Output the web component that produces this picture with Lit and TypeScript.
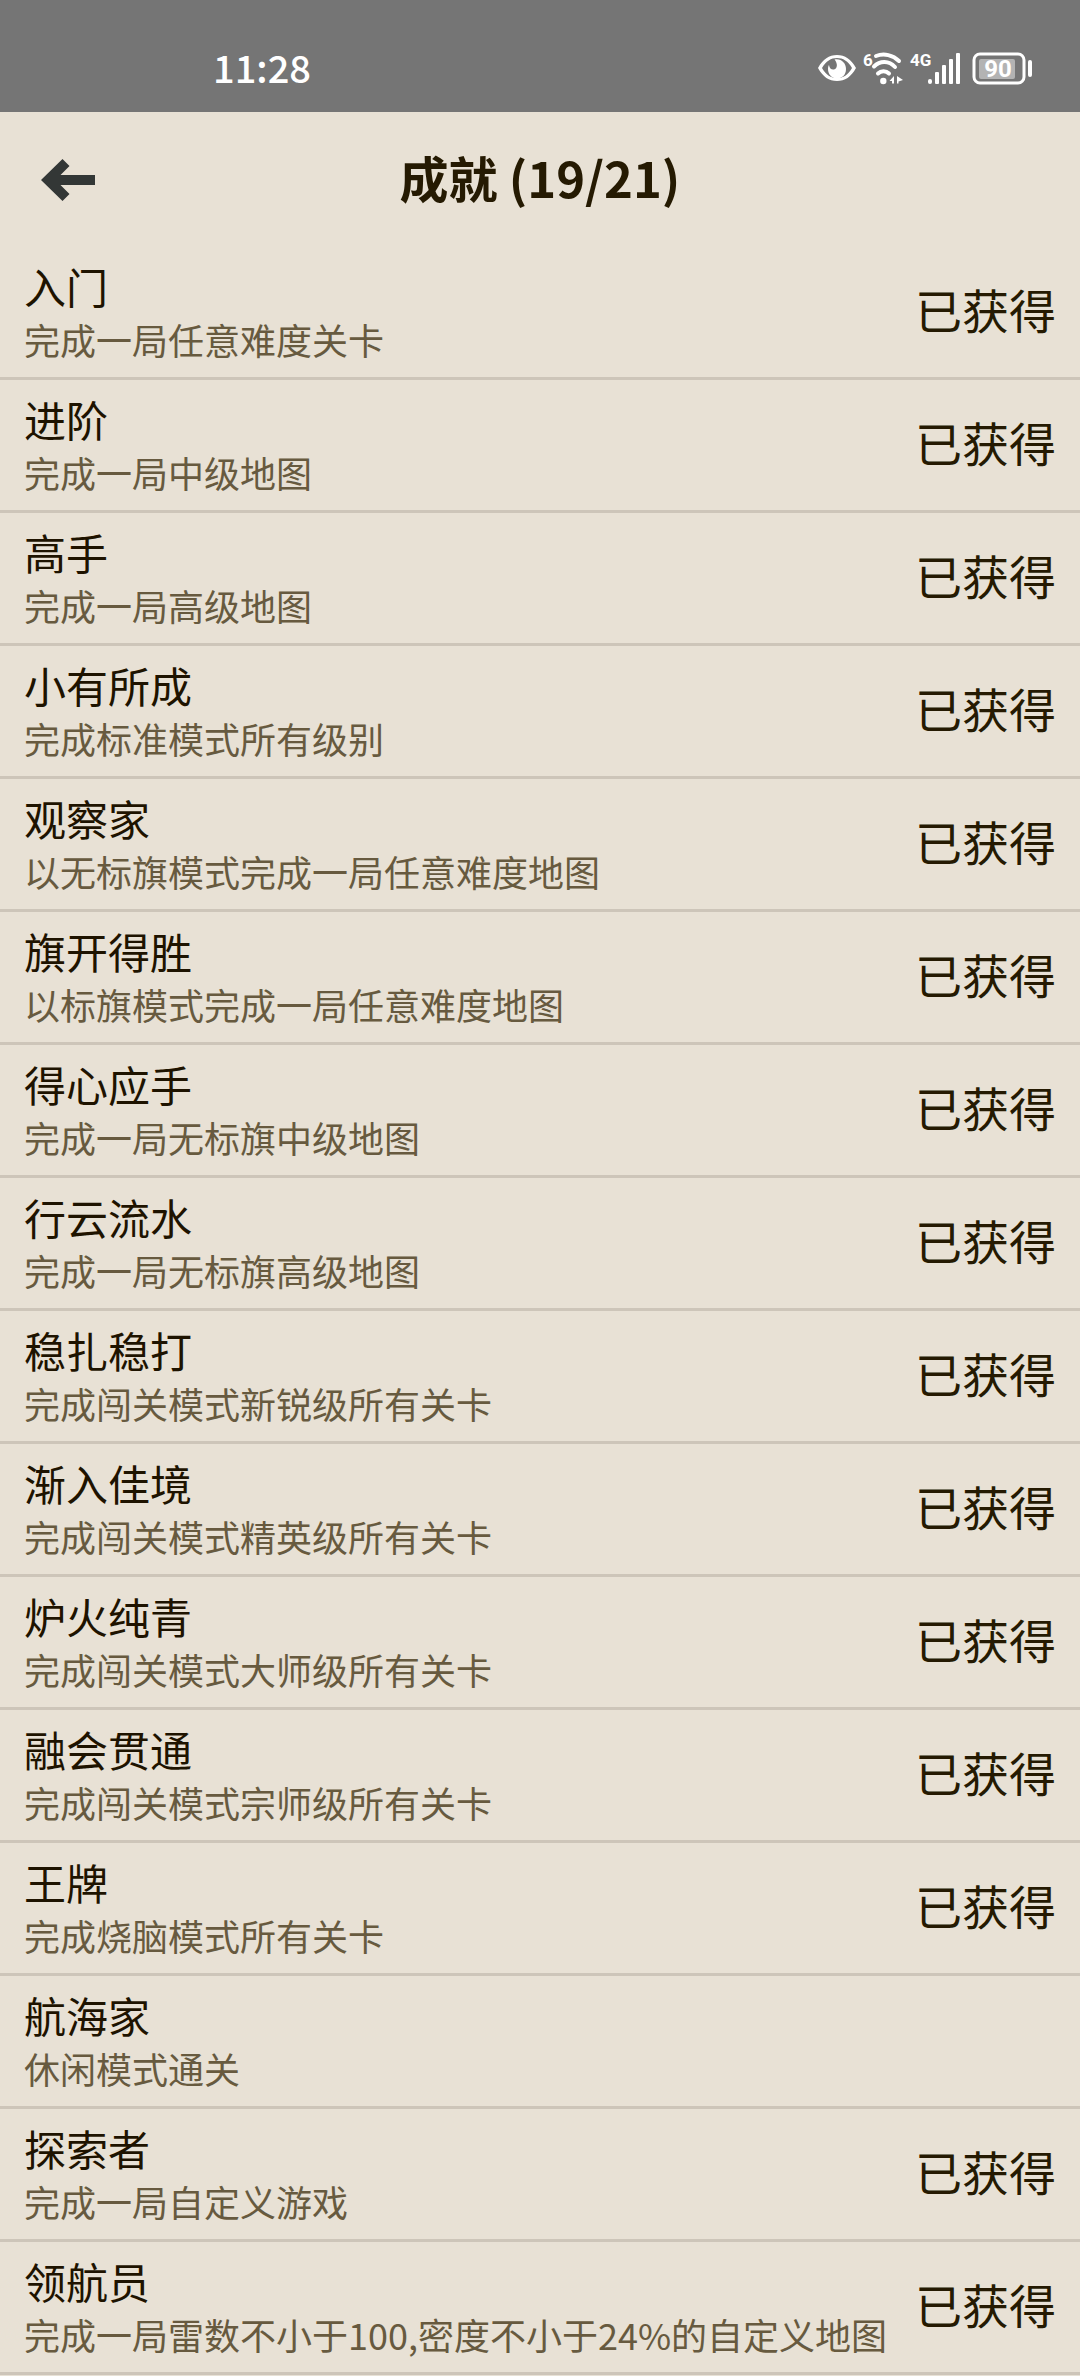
import { LitElement, html, css, nothing } from "lit";
import { customElement, property } from "lit/decorators.js";

interface Achievement {
  name: string;
  goal: string;
  earned: boolean;
}

const achievements: Achievement[] = [
  { name: "入门", goal: "完成一局任意难度关卡", earned: true },
  { name: "进阶", goal: "完成一局中级地图", earned: true },
  { name: "高手", goal: "完成一局高级地图", earned: true },
  { name: "小有所成", goal: "完成标准模式所有级别", earned: true },
  { name: "观察家", goal: "以无标旗模式完成一局任意难度地图", earned: true },
  { name: "旗开得胜", goal: "以标旗模式完成一局任意难度地图", earned: true },
  { name: "得心应手", goal: "完成一局无标旗中级地图", earned: true },
  { name: "行云流水", goal: "完成一局无标旗高级地图", earned: true },
  { name: "稳扎稳打", goal: "完成闯关模式新锐级所有关卡", earned: true },
  { name: "渐入佳境", goal: "完成闯关模式精英级所有关卡", earned: true },
  { name: "炉火纯青", goal: "完成闯关模式大师级所有关卡", earned: true },
  { name: "融会贯通", goal: "完成闯关模式宗师级所有关卡", earned: true },
  { name: "王牌", goal: "完成烧脑模式所有关卡", earned: true },
  { name: "航海家", goal: "休闲模式通关", earned: false },
  { name: "探索者", goal: "完成一局自定义游戏", earned: true },
  { name: "领航员", goal: "完成一局雷数不小于100,密度不小于24%的自定义地图", earned: true },
];

@customElement("status-bar")
export class StatusBar extends LitElement {
  static styles = css`
    :host {
      display: flex;
      align-items: center;
      justify-content: space-between;
      box-sizing: border-box;
      height: 112px;
      padding: 24px 48px 0 213px;
      background: #757575;
      color: #fff;
    }
    .clock {
      padding-bottom: 2px;
      font-size: 38px;
      line-height: 48px;
      font-weight: 500;
    }
    .icons {
      display: flex;
      align-items: center;
      gap: 8px;
    }
    svg {
      display: block;
      overflow: visible;
      fill: currentColor;
    }
    .arc {
      fill: none;
      stroke: currentColor;
      stroke-width: 4;
      stroke-linecap: round;
    }
    .small {
      font: 700 17px Roboto, sans-serif;
    }
    .level {
      font: 700 24px Roboto, sans-serif;
      text-anchor: middle;
    }
  `;

  render() {
    return html`
      <time class="clock">11:28</time>
      <div class="icons">
        <svg width="38" height="34" viewBox="0 0 38 34" aria-hidden="true">
          <path
            fill-rule="evenodd"
            d="M0 17C5 8 11 4 19 4s14 4 19 13C33 26 27 30 19 30S5 26 0 17Zm4 0c4 7 9 10 15 10s11-3 15-10C30 10 25 7 19 7S8 10 4 17Z"
          />
          <path d="M16.500 8.500C23 7 28 12 28 18s-4 9.500-9 9.500-9-4-9-9.500c0-1.500.3-3 1-4 .5 3.500 2.500 5 5 4.500 3.500-.8 4-6 .5-10Z" />
        </svg>
        <svg width="39" height="34" viewBox="0 0 39 34" aria-hidden="true">
          <text class="small" x="-1" y="15">6</text>
          <path class="arc" d="M12 5C20 2 29 4 35 10M10 15.500C16 9.500 25 9.500 31 16M14 22.500C17 19.500 22 19.500 25 22.500" />
          <circle cx="19.300" cy="30" r="3.200" />
          <path d="M30 25v7.500h-2V30h-2.500ZM33 25l6 4-4.500 1.500V32.500H33Z" />
        </svg>
        <svg width="52" height="34" viewBox="0 0 52 34" aria-hidden="true">
          <text class="small" x="-1" y="15">4G</text>
          <rect x="17" y="28" width="4" height="5" rx="2" />
          <rect x="24" y="21" width="4" height="12" rx="1" />
          <rect x="31" y="14" width="4" height="19" rx="1" />
          <rect x="38" y="8" width="4" height="25" rx="1" />
          <rect x="45" y="2" width="4" height="31" rx="1" />
        </svg>
        <svg width="61" height="34" viewBox="0 0 61 34" aria-hidden="true">
          <rect x="3" y="3" width="50" height="29" rx="6" fill="none" stroke="currentColor" stroke-width="3" />
          <rect x="8" y="8" width="36" height="20" rx="2" opacity="0.450" />
          <rect x="57" y="9" width="4" height="17" rx="2" />
          <text class="level" x="27" y="26">90</text>
        </svg>
      </div>
    `;
  }
}

@customElement("achievement-row")
export class AchievementRow extends LitElement {
  @property({ attribute: false }) item!: Achievement;

  static styles = css`
    :host {
      display: flex;
      align-items: center;
      justify-content: space-between;
      gap: 24px;
      padding: 10px 24px 14px;
      border-bottom: 3px solid #cdc5b9;
    }
    .name {
      margin: 0;
      font-size: 42px;
      line-height: 58px;
      font-weight: 400;
      color: #1e1300;
    }
    .goal {
      margin: 0;
      font-size: 36px;
      line-height: 48px;
      color: #675a3f;
    }
    .state {
      flex: none;
      padding-bottom: 2px;
      font-size: 47px;
      line-height: 56px;
      color: #251a02;
    }
  `;

  render() {
    return html`
      <div>
        <h2 class="name">${this.item.name}</h2>
        <p class="goal">${this.item.goal}</p>
      </div>
      ${this.item.earned ? html`<span class="state">已获得</span>` : nothing}
    `;
  }
}

@customElement("app-root")
export class AppRoot extends LitElement {
  static styles = css`
    :host {
      display: block;
      min-height: 100vh;
      background: #e8e1d5;
      font-family: "Noto Sans CJK SC", sans-serif;
    }
    .header {
      display: grid;
      grid-template-columns: 136px 1fr 136px;
      align-items: center;
      height: 135px;
    }
    .back {
      display: flex;
      align-items: center;
      justify-content: center;
      height: 96px;
      padding: 0;
      border: 0;
      background: none;
      color: #333736;
      cursor: pointer;
    }
    .heading {
      margin: 0;
      padding-bottom: 5px;
      text-align: center;
      font-size: 49px;
      line-height: 64px;
      font-weight: 700;
      color: #251a02;
    }
    .list {
      margin: 0;
      padding: 0;
      list-style: none;
    }
  `;

  render() {
    return html`
      <status-bar></status-bar>
      <header class="header">
        <button class="back" aria-label="返回">
          <svg width="54" height="42" viewBox="0 0 54 42" fill="currentColor" aria-hidden="true">
            <path d="M0 21 21.500 0l7 7-9 9H54v10H19.500l9 9-7 7Z" />
          </svg>
        </button>
        <h1 class="heading">成就 (19/21)</h1>
      </header>
      <ul class="list">
        ${achievements.map((a) => html`<li><achievement-row .item=${a}></achievement-row></li>`)}
      </ul>
    `;
  }
}
